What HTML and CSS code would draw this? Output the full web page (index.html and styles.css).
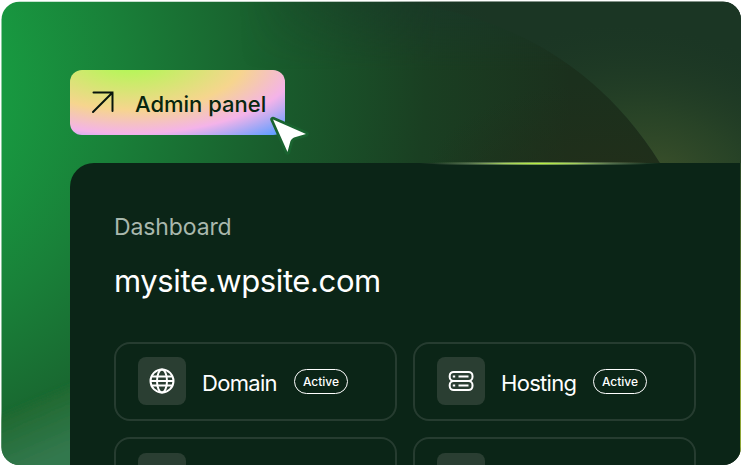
FILE: index.html
```html
<!DOCTYPE html>
<html lang="en">
<head>
<meta charset="utf-8">
<title>Dashboard</title>
<link rel="stylesheet" href="styles.css">
</head>
<body>
<main class="stage">
  <svg class="backdrop" viewBox="0 0 741 465" aria-hidden="true">
    <defs>
      <radialGradient id="base" gradientUnits="userSpaceOnUse" cx="-150" cy="80" r="720">
        <stop offset=".2" stop-color="#189b41"/>
        <stop offset=".37" stop-color="#198139"/>
        <stop offset=".6" stop-color="#195b2c"/>
        <stop offset=".8" stop-color="#1a3f22"/>
        <stop offset="1" stop-color="#1b301d"/>
      </radialGradient>
      <linearGradient id="sky" gradientUnits="userSpaceOnUse" x1="370" y1="0" x2="490" y2="0">
        <stop offset="0" stop-color="#1b3624" stop-opacity="0"/>
        <stop offset="1" stop-color="#1b3624"/>
      </linearGradient>
      <radialGradient id="warm" gradientUnits="userSpaceOnUse" cx="0" cy="0" r="1" gradientTransform="translate(660 170) rotate(15) scale(210 140)">
        <stop offset="0" stop-color="#394f2a"/>
        <stop offset=".4" stop-color="#2a4527" stop-opacity=".85"/>
        <stop offset="1" stop-color="#1d3925" stop-opacity="0"/>
      </radialGradient>
      <radialGradient id="brown" gradientUnits="userSpaceOnUse" cx="0" cy="0" r="1" gradientTransform="translate(610 190) scale(190 110)">
        <stop offset="0" stop-color="#232e19"/>
        <stop offset="1" stop-color="#202f1a" stop-opacity="0"/>
      </radialGradient>
      <linearGradient id="topshade" x1="0" y1="0" x2="0" y2="1">
        <stop offset="0" stop-color="#19362a" stop-opacity=".65"/>
        <stop offset="1" stop-color="#19362a" stop-opacity="0"/>
      </linearGradient>
      <linearGradient id="toprange" gradientUnits="userSpaceOnUse" x1="240" y1="0" x2="440" y2="0">
        <stop offset="0" stop-color="#000"/>
        <stop offset="1" stop-color="#fff"/>
      </linearGradient>
      <mask id="topmask"><rect width="741" height="465" fill="url(#toprange)"/></mask>
      <linearGradient id="haze" gradientUnits="userSpaceOnUse" x1="30" y1="400" x2="55" y2="458">
        <stop offset="0" stop-color="#20692f" stop-opacity=".75"/>
        <stop offset=".4" stop-color="#276f3b"/>
        <stop offset="1" stop-color="#33784e"/>
      </linearGradient>
      <linearGradient id="edge" x1="0" y1="0" x2="0" y2="1">
        <stop offset="0" stop-color="#2d4b2a"/>
        <stop offset=".35" stop-color="#52702e"/>
        <stop offset=".65" stop-color="#8b9f36"/>
        <stop offset="1" stop-color="#90a939"/>
      </linearGradient>
      <filter id="soften"><feGaussianBlur stdDeviation="3"/></filter>
    </defs>
    <rect width="741" height="465" fill="url(#base)"/>
    <rect width="741" height="70" fill="url(#topshade)" mask="url(#topmask)"/>
    <rect x="400" width="341" height="200" fill="url(#brown)"/>
    <path d="M370 0C480 5 590 50 660 163V200H741V0Z" fill="url(#sky)"/>
    <path d="M370 0C480 5 590 50 660 163V200H741V0Z" fill="url(#warm)"/>
    <path d="M-20 425 90 378V490H-20Z" fill="url(#haze)" filter="url(#soften)"/>
    <rect x="739" y="163" width="2" height="302" fill="url(#edge)"/>
  </svg>

  <div class="content">
    <div class="admin">
      <svg class="admin-arrow" width="24" height="24" viewBox="0 0 24 24" fill="none" stroke="#07150d" stroke-width="2" stroke-linecap="round" aria-hidden="true"><path d="M2 21 21.5 1.500M2.500 1.500H21.500V20"/></svg>
      <span class="admin-label">Admin panel</span>
      <svg class="cursor" width="46" height="46" viewBox="0 0 46 46" aria-hidden="true"><path d="M6 4.500 39 19 27 22.500Q24.500 23.500 23.500 26L20.500 37Z" fill="#fff" stroke="#1a6430" stroke-width="5.500" stroke-linejoin="round" paint-order="stroke"/></svg>
    </div>

    <section class="panel">
      <p class="eyebrow">Dashboard</p>
      <h1 class="site">mysite.wpsite.com</h1>
      <div class="cards">
        <article class="card">
          <span class="tile"><svg width="26" height="26" viewBox="0 0 26 26" fill="none" stroke="#fff" stroke-width="2" aria-hidden="true"><circle cx="13" cy="13" r="11.5"/><ellipse cx="13" cy="13" rx="5" ry="11.5"/><path d="M3 8.6H23M1.5 13H24.5M3 17.4H23"/></svg></span>
          <span class="name">Domain</span>
          <span class="badge">Active</span>
        </article>
        <article class="card">
          <span class="tile"><svg width="26" height="26" viewBox="0 0 26 26" fill="none" stroke="#fff" stroke-width="2" aria-hidden="true"><rect x="1.700" y="3.900" width="22.800" height="9.100" rx="4"/><rect x="1.700" y="13" width="22.800" height="9.100" rx="4"/><path d="M4.800 8.500H7.200M10.500 8.500H20.500M4.800 17.500H7.200M10.500 17.500H20.500"/></svg></span>
          <span class="name">Hosting</span>
          <span class="badge">Active</span>
        </article>
        <article class="card"><span class="tile"></span></article>
        <article class="card"><span class="tile"></span></article>
      </div>
    </section>
  </div>
</main>
</body>
</html>
```

FILE: styles.css
```css
* { box-sizing: border-box; }

body {
  margin: 0;
  width: 741px;
  height: 465px;
  overflow: hidden;
  background: #fff;
  font-family: Inter, "Liberation Sans", sans-serif;
}

.stage {
  position: relative;
  width: 741px;
  height: 465px;
  overflow: hidden;
  clip-path: inset(1.7px 0 0 1.5px round 18px);
}

.backdrop {
  position: absolute;
  inset: 0;
  width: 741px;
  height: 465px;
}

.content {
  position: relative;
  padding: 70px 1px 0 70px;
}

.admin {
  position: relative;
  display: flex;
  align-items: center;
  width: 215px;
  height: 65px;
  padding-left: 21px;
  gap: 20px;
  border-radius: 12px;
  background: radial-gradient(ellipse 211px 92px at 60px -10px, #b6f659 10%, #f6d58e 54%, #f4b3e9 80%, #659fff 105%);
  color: #07260f;
}

.admin-arrow { flex: none; }

.admin-label {
  font-size: 22px;
  font-weight: 500;
  line-height: 28px;
  white-space: nowrap;
  padding-top: 3px;
}

.cursor {
  position: absolute;
  left: 197px;
  top: 45px;
}

.panel {
  position: relative;
  height: 310px;
  margin-top: 28px;
  padding: 49px 44px 0;
  border-top-left-radius: 24px;
  background: #0b2517;
}

.panel::before {
  content: "";
  position: absolute;
  left: 350px;
  top: -1px;
  width: 240px;
  height: 3px;
  background: radial-gradient(ellipse 120px 2.2px at center, #b9f33d 0, #a4cf5b 30%, rgba(140, 170, 120, 0.55) 60%, transparent 100%);
}

.eyebrow {
  margin: 0;
  font-size: 23px;
  line-height: 30px;
  letter-spacing: -0.12px;
  color: #a9b8ad;
}

.site {
  margin: 19px 0 0;
  font-size: 31px;
  font-weight: 400;
  line-height: 40px;
  letter-spacing: -0.38px;
  color: #fff;
}

.cards {
  display: grid;
  grid-template-columns: 283px 283px;
  gap: 16px;
  margin-top: 40.5px;
}

.card {
  display: flex;
  align-items: center;
  height: 79.5px;
  padding-left: 22px;
  border: 2px solid #263c30;
  border-radius: 16px;
}

.tile {
  display: flex;
  align-items: center;
  justify-content: center;
  width: 48px;
  height: 48px;
  border-radius: 8px;
  background: #2a3e32;
}

.name {
  box-sizing: content-box;
  width: 76px;
  padding: 3px 0 0 16px;
  font-size: 22px;
  line-height: 28px;
  letter-spacing: -0.7px;
  color: #fff;
  white-space: nowrap;
}

.badge {
  width: 54px;
  height: 25px;
  margin-left: 16px;
  border: 1.3px solid #fff;
  border-radius: 13px;
  font-size: 12px;
  font-weight: 500;
  line-height: 23px;
  text-align: center;
  color: #fff;
}
```
